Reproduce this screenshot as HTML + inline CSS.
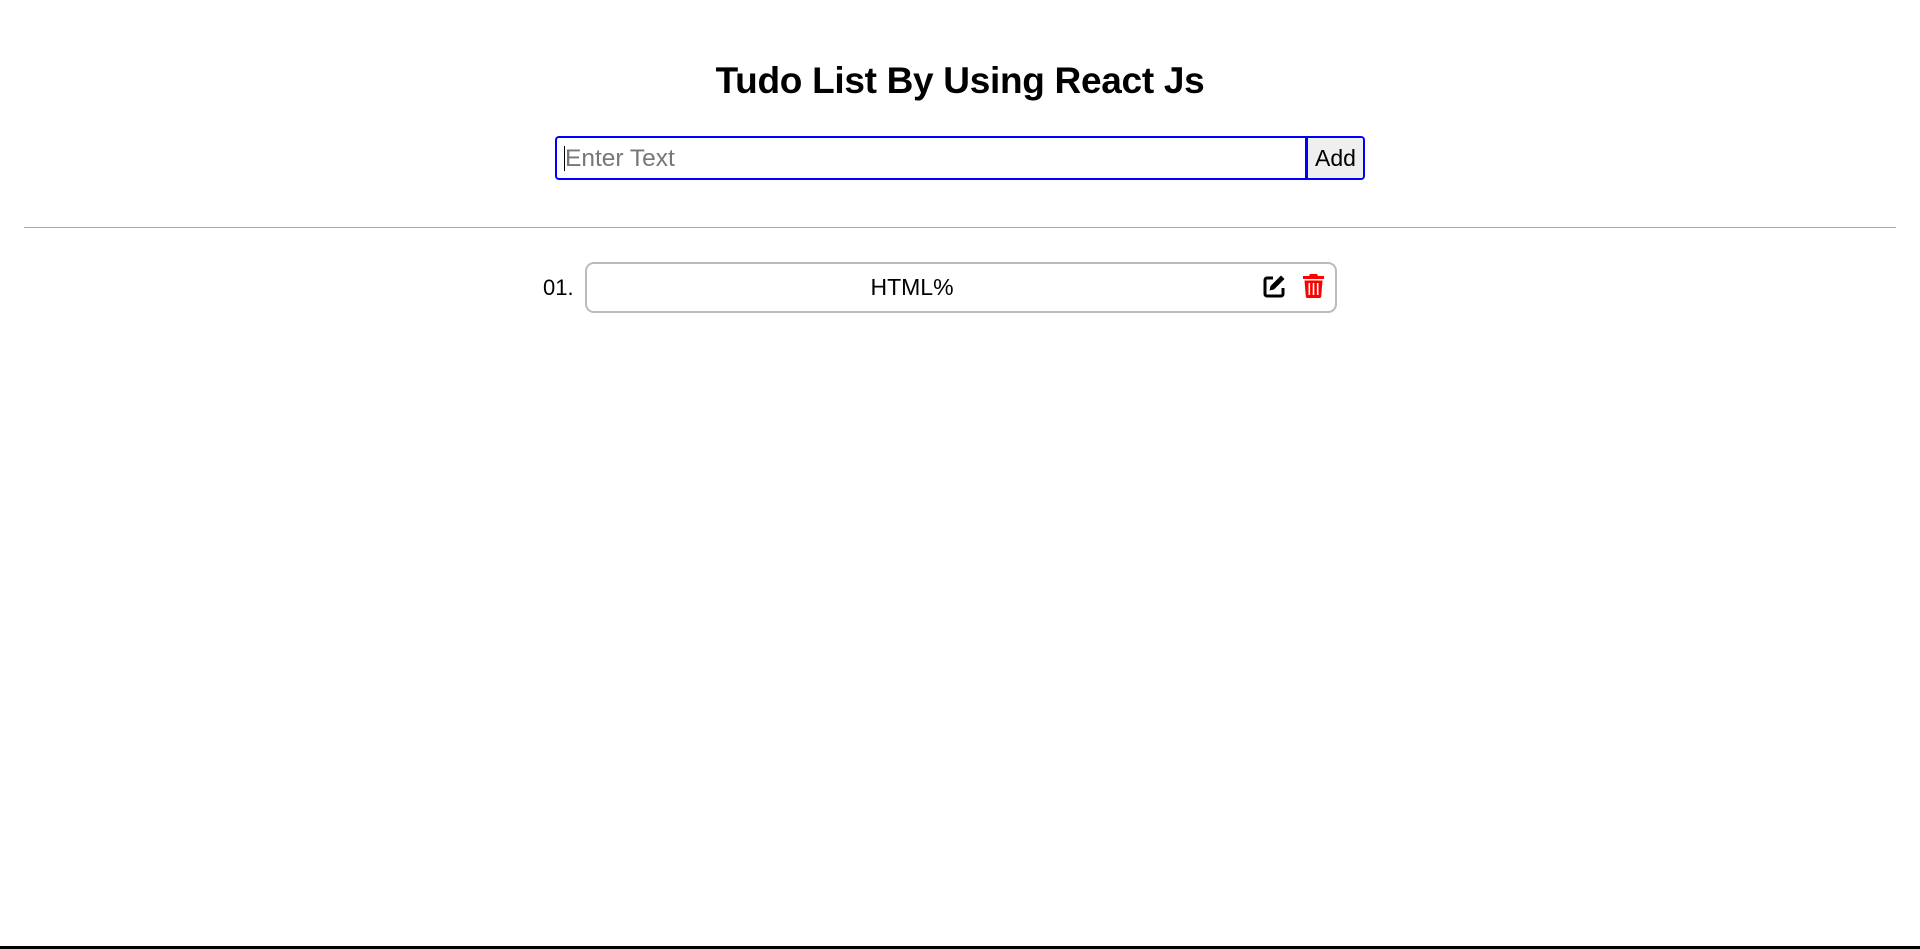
<!DOCTYPE html>
<html><head><style>
html,body{margin:0;padding:0;background:#fff;width:1920px;height:949px;overflow:hidden;position:relative;font-family:"Liberation Sans",sans-serif}
h1{position:absolute;left:0;right:0;top:58px;margin:0;text-align:center;font-size:37px;font-weight:bold;letter-spacing:-0.3px;line-height:46px}
.inp{position:absolute;left:555px;top:136px;width:806px;height:40px;border:2px solid #00f;border-radius:4px;box-sizing:content-box;overflow:hidden}
.ph{position:absolute;left:8px;top:8px;font-size:24.5px;color:#777;line-height:25px}
.caret{position:absolute;left:7px;top:8px;width:1px;height:25px;background:#000}
.btn{position:absolute;left:748px;top:0;width:58px;height:40px;background:#efefef;border-left:3px solid #00f;box-sizing:border-box;font-size:23px;line-height:40px;text-align:center;color:#000}
hr{position:absolute;left:24px;top:227px;width:1872px;margin:0;border:0;border-top:1px solid #aaa}
.num{position:absolute;left:543px;top:276px;font-size:22px;line-height:24px}
.item{position:absolute;left:585px;top:262px;width:748px;height:47px;border:2px solid #bbb;border-radius:9px}
.item .t{position:absolute;left:0;right:0;top:11px;text-align:center;font-size:23px;line-height:24px;padding-right:98px}
.bot{position:absolute;left:0;top:946px;width:1920px;height:3px;background:#000}
</style></head><body>
<h1>Tudo List By Using React Js</h1>
<div class="inp"><div class="caret"></div><div class="ph">Enter Text</div><div class="btn">Add</div></div>
<hr>
<div class="num">01.</div>
<div class="item"><div class="t">HTML%</div></div>
<svg style="position:absolute;left:1262px;top:274px" width="24" height="24" viewBox="0 0 24 24">
<path d="M11 4H5a2 2 0 0 0-2 2v14a2 2 0 0 0 2 2h14a2 2 0 0 0 2-2v-6" fill="none" stroke="#000" stroke-width="3"/>
<path d="M19 1.5l3.5 3.5L12 15.5 7.5 16.5 8.5 12z" fill="#000"/>
</svg>
<svg style="position:absolute;left:1303px;top:274px" width="21" height="24" viewBox="0 0 21 24">
<path d="M7 0h7l1 2h6v3H0V2h6z" fill="#f00"/>
<path d="M1.5 6.5h18l-1.3 16a1.8 1.8 0 0 1-1.8 1.5H4.6a1.8 1.8 0 0 1-1.8-1.5z" fill="#f00"/>
<rect x="5.5" y="9" width="1.6" height="12" fill="#fff"/><rect x="9.7" y="9" width="1.6" height="12" fill="#fff"/><rect x="13.9" y="9" width="1.6" height="12" fill="#fff"/>
</svg>
<div class="bot"></div>
</body></html>
